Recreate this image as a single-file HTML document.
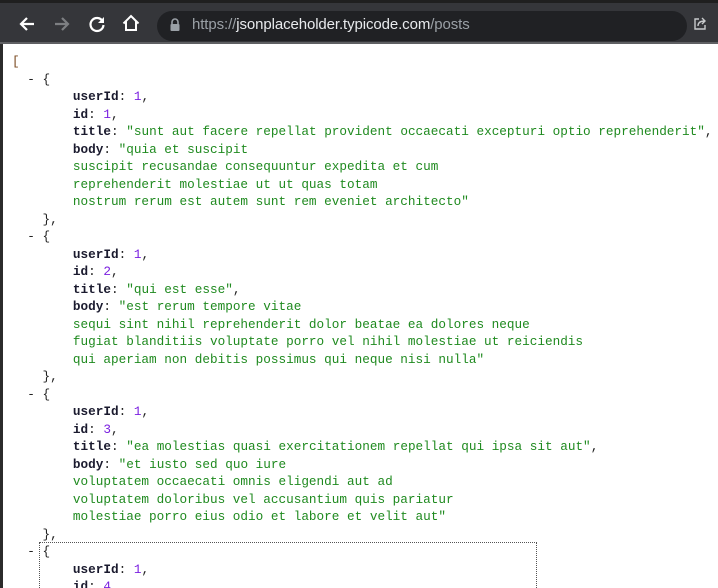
<!DOCTYPE html>
<html><head><style>
*{margin:0;padding:0;box-sizing:border-box}
html,body{width:718px;height:588px;overflow:hidden}
body{background:#fff;position:relative;font-family:"Liberation Sans",sans-serif}
.top{position:absolute;left:0;top:0;width:718px;height:44px;background:#35363a;border-top:3px solid #1f1f1f;border-bottom:2px solid #5f6063}
.omni{position:absolute;left:157px;top:8px;width:530px;height:30px;border-radius:15px;background:#202124}
.url{position:absolute;left:192px;top:13px;font-size:15px;color:#9aa0a6;letter-spacing:-0.1px}
.url b{font-weight:normal;color:#e8eaed}
.lb{position:absolute;left:0;top:44px;width:3px;height:544px;background:#2b2b2b}
pre{position:absolute;left:12px;top:53px;font-family:"Liberation Mono",monospace;font-size:12.7px;line-height:17.5px;color:#222}
.k{font-weight:bold;color:#1a1a2e}
.n{color:#7a1fe0}
.s{color:#1f8a1f}
.br{color:#7a4a20}
.focus{position:absolute;left:39px;top:542px;width:498px;height:60px;border:1px dotted #555}
</style></head><body>
<div class="top">
<svg style="position:absolute;left:16px;top:10px" width="22" height="22" viewBox="0 0 22 22"><path d="M18 11H5M11 5l-6 6 6 6" stroke="#fff" stroke-width="2.2" fill="none"/></svg>
<svg style="position:absolute;left:51px;top:10px" width="22" height="22" viewBox="0 0 22 22"><path d="M4 11h13M11 5l6 6-6 6" stroke="#7d7f82" stroke-width="2.2" fill="none"/></svg>
<svg style="position:absolute;left:86px;top:10px" width="22" height="22" viewBox="0 0 22 22"><path d="M16.5 8A6.5 6.5 0 1 0 17.5 12" stroke="#fff" stroke-width="2.2" fill="none"/><path d="M18 4v6h-6z" fill="#fff"/></svg>
<svg style="position:absolute;left:120px;top:9px" width="22" height="22" viewBox="0 0 22 22"><path d="M3.5 11.5L11 4l7.5 7.5M6 9.5V18h10V9.5" stroke="#fff" stroke-width="2" fill="none"/></svg>
<div class="omni"></div>
<svg style="position:absolute;left:169px;top:14px" width="12" height="16" viewBox="0 0 12 16"><path d="M3 7V5a3 3 0 0 1 6 0v2" stroke="#9aa0a6" stroke-width="1.6" fill="none"/><rect x="1.5" y="7" width="9" height="7" rx="1" fill="#9aa0a6"/></svg>
<div class="url">https://<b>jsonplaceholder.typicode.com</b>/posts</div>
<svg style="position:absolute;left:692px;top:13px" width="16" height="16" viewBox="0 0 16 16"><path d="M7 3H3v10h10V9" stroke="#c8cacc" stroke-width="1.4" fill="none"/><path d="M6 10c0-4 3-5 7-5M10 2l3 3-3 3" stroke="#c8cacc" stroke-width="1.4" fill="none"/></svg>
</div>
<div class="lb"></div>
<pre><span class="br">[</span>
  - {
        <span class="k">userId</span>: <span class="n">1</span>,
        <span class="k">id</span>: <span class="n">1</span>,
        <span class="k">title</span>: <span class="s">"sunt aut facere repellat provident occaecati excepturi optio reprehenderit"</span>,
        <span class="k">body</span>: <span class="s">"quia et suscipit
        suscipit recusandae consequuntur expedita et cum
        reprehenderit molestiae ut ut quas totam
        nostrum rerum est autem sunt rem eveniet architecto"</span>
    },
  - {
        <span class="k">userId</span>: <span class="n">1</span>,
        <span class="k">id</span>: <span class="n">2</span>,
        <span class="k">title</span>: <span class="s">"qui est esse"</span>,
        <span class="k">body</span>: <span class="s">"est rerum tempore vitae
        sequi sint nihil reprehenderit dolor beatae ea dolores neque
        fugiat blanditiis voluptate porro vel nihil molestiae ut reiciendis
        qui aperiam non debitis possimus qui neque nisi nulla"</span>
    },
  - {
        <span class="k">userId</span>: <span class="n">1</span>,
        <span class="k">id</span>: <span class="n">3</span>,
        <span class="k">title</span>: <span class="s">"ea molestias quasi exercitationem repellat qui ipsa sit aut"</span>,
        <span class="k">body</span>: <span class="s">"et iusto sed quo iure
        voluptatem occaecati omnis eligendi aut ad
        voluptatem doloribus vel accusantium quis pariatur
        molestiae porro eius odio et labore et velit aut"</span>
    },
  - {
        <span class="k">userId</span>: <span class="n">1</span>,
        <span class="k">id</span>: <span class="n">4</span>,
</pre>
<div class="focus"></div>
</body></html>
